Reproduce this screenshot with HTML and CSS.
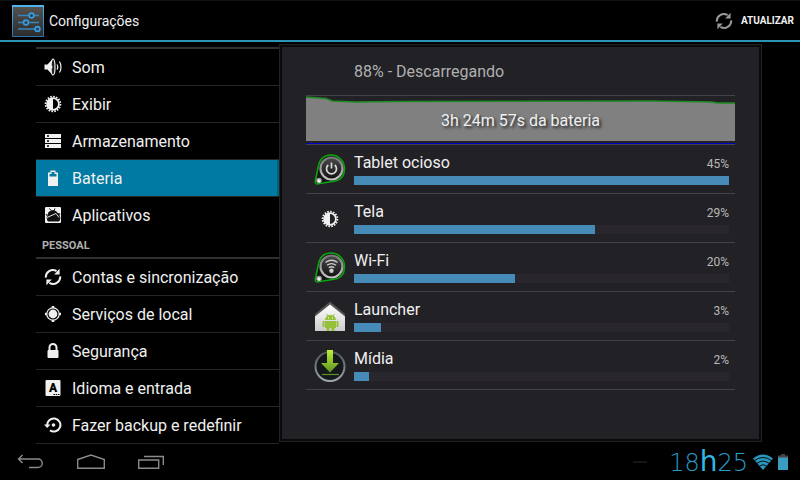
FILE: index.html
```html
<!DOCTYPE html>
<html lang="pt-BR">
<head>
    <meta charset="utf-8">
    <meta name="viewport" content="width=device-width, initial-scale=1">
    <title>Configurações</title>
    <link rel="stylesheet" href="styles.css">
</head>
<body>
    <!-- shared icons -->
    <svg class="defs" width="0" height="0" aria-hidden="true">
        <defs>
            <linearGradient id="tile" x1="0" y1="0" x2="0" y2="1">
                <stop offset="0" stop-color="#55534f"/>
                <stop offset="1" stop-color="#2c2c2c"/>
            </linearGradient>
            <linearGradient id="edge" x1="0" y1="0" x2="0" y2="1">
                <stop offset="0" stop-color="#4fb4ee"/>
                <stop offset="1" stop-color="#2a6fa8"/>
            </linearGradient>
            <linearGradient id="metal" x1="0" y1="0" x2="0" y2="1">
                <stop offset="0" stop-color="#777"/>
                <stop offset="1" stop-color="#c4c4c4"/>
            </linearGradient>
            <linearGradient id="dark" x1="0" y1="0" x2="0" y2="1">
                <stop offset="0" stop-color="#4a4a4a"/>
                <stop offset="1" stop-color="#111"/>
            </linearGradient>
            <linearGradient id="house" x1="0" y1="0" x2="0" y2="1">
                <stop offset="0" stop-color="#fff"/>
                <stop offset="1" stop-color="#ccc"/>
            </linearGradient>
            <linearGradient id="arrow" x1="0" y1="0" x2="0" y2="1">
                <stop offset="0" stop-color="#bdf03a"/>
                <stop offset="1" stop-color="#5c9420"/>
            </linearGradient>
            <linearGradient id="ring" x1="0" y1="0" x2="0" y2="1">
                <stop offset="0" stop-color="#4b535a"/>
                <stop offset="1" stop-color="#a0a8ac"/>
            </linearGradient>
        </defs>
        <symbol id="sync" viewBox="0 0 18 18">
            <path d="M1.8 9.6A7 7 0 0 1 12.6 3.2M16.2 8.4A7 7 0 0 1 5.4 14.8" fill="none" stroke="currentColor" stroke-width="2"/>
            <path d="M15.6 .8v5.6h-5.4zM2.4 17.2v-5.6h5.4z" fill="currentColor"/>
        </symbol>
        <symbol id="display" viewBox="0 0 18 18">
            <circle cx="9" cy="9" r="7.4" fill="none" stroke="currentColor" stroke-width="1.8" stroke-dasharray="1.6 1.3"/>
            <circle cx="9" cy="9" r="5.9" fill="none" stroke="currentColor" stroke-width="1.8"/>
            <path d="M9 3a6 6 0 0 0 0 12z" fill="currentColor"/>
        </symbol>
        <symbol id="badge" viewBox="0 0 32 32">
            <path d="M3 30C1.500 29.800 1 28.500 1.300 27L4.400 12C6 4.500 10.500 1 17 1a13.500 13.500 0 0 1 13.500 13.700c0 6.500-3.500 11-9 12.300z" fill="#151515" stroke="#08a80c" stroke-width="1.500"/>
            <circle cx="17.500" cy="14.500" r="11" fill="url(#dark)" stroke="url(#metal)" stroke-width="2.200"/>
            <circle cx="5" cy="26.500" r="2.800" fill="#999"/>
            <circle cx="5" cy="27" r="1.700" fill="#eee"/>
        </symbol>
    </svg>

    <header class="topbar">
        <svg class="app-icon" viewBox="0 0 32 32" aria-hidden="true">
            <rect x=".5" y=".5" width="31" height="31" fill="url(#tile)" stroke="url(#edge)"/>
            <path d="M1 1h30" stroke="#4fb4ee" stroke-width="2"/>
            <path d="M6 10.500h11M22 10.500h5M6 17.500h5M17 17.500h10M6 24h17" stroke="#3387c0" stroke-width="1.500"/>
            <g fill="#22465e" stroke="#3d9bdb" stroke-width="1.600">
                <circle cx="19.500" cy="10.500" r="2.400"/>
                <circle cx="14" cy="17.500" r="2.400"/>
                <circle cx="25.500" cy="24" r="2.400"/>
            </g>
        </svg>
        <h1 class="title">Configurações</h1>
        <button class="refresh" type="button">
            <svg class="icon" aria-hidden="true"><use href="#sync"/></svg>
            Atualizar
        </button>
    </header>

    <main class="content">
        <nav class="sidebar">
            <ul class="menu">
                <li><a class="item" href="#som">
                    <svg class="icon" viewBox="0 0 18 18" aria-hidden="true">
                        <path d="M.5 6.500h3L9 .5v17l-5.500-6h-3z" fill="currentColor"/>
                        <ellipse cx="9" cy="9" rx="2" ry="8" fill="#222" stroke="currentColor" stroke-width="1.200"/>
                        <path d="M7 6.500q3 2.500 0 5z" fill="currentColor"/>
                        <path d="M13 6.500q1.500 2.500 0 5M15.500 3.500q3 5.500 0 11" fill="none" stroke="currentColor" stroke-width="1.200"/>
                    </svg>Som</a></li>
                <li><a class="item" href="#exibir">
                    <svg class="icon" aria-hidden="true"><use href="#display"/></svg>Exibir</a></li>
                <li><a class="item" href="#armazenamento">
                    <svg class="icon" viewBox="0 0 18 18" aria-hidden="true">
                        <path d="M1 2h16v4H1zM1 7h16v4H1zM1 12h16v4H1z" fill="currentColor"/>
                        <path d="M3 4h2M3 9h2M3 14h2" stroke="#000" stroke-width="1.500"/>
                    </svg>Armazenamento</a></li>
                <li><a class="item active" href="#bateria" aria-current="page">
                    <svg class="icon" viewBox="0 0 18 18" aria-hidden="true">
                        <path d="M6.500 1.500h5v2H14V17H4V3.500h2.500z" fill="currentColor"/>
                        <path d="M5.500 5h2V3h3v2h2v2.500h-7z" fill="#0079a3"/>
                    </svg>Bateria</a></li>
                <li><a class="item" href="#aplicativos">
                    <svg class="icon" viewBox="0 0 18 18" aria-hidden="true">
                        <rect x="1" y="1" width="16" height="16" rx="1" fill="currentColor"/>
                        <path d="M4 8.500A5 4.500 0 0 1 13 6.500L4 10zM3 11l11-4 2 5-1 3H4zM5.500 2.500l1.500 2M11 2.500L10 4.500M2 8l2 3M15 7l1 2" fill="#111" stroke="#111"/>
                        <path d="M3 11.500l9-4 3 4" fill="none" stroke="#ddd" stroke-width="1"/>
                    </svg>Aplicativos</a></li>
            </ul>
            <h2 class="section">Pessoal</h2>
            <ul class="menu">
                <li><a class="item" href="#contas">
                    <svg class="icon" aria-hidden="true"><use href="#sync"/></svg>Contas e sincronização</a></li>
                <li><a class="item" href="#local">
                    <svg class="icon" viewBox="0 0 18 18" aria-hidden="true">
                        <circle cx="9" cy="9" r="4.400" fill="currentColor"/>
                        <circle cx="9" cy="9" r="6.200" fill="none" stroke="currentColor" stroke-width="1.200"/>
                        <path d="M9 1v2M9 15v2M1 9h2M15 9h2" stroke="currentColor" stroke-width="2.500"/>
                    </svg>Serviços de local</a></li>
                <li><a class="item" href="#seguranca">
                    <svg class="icon" viewBox="0 0 18 18" aria-hidden="true">
                        <path d="M5.500 9V5.500a3.500 3.500 0 0 1 7 0V9" fill="none" stroke="currentColor" stroke-width="2"/>
                        <rect x="3.500" y="8" width="11" height="8" rx="1" fill="currentColor"/>
                    </svg>Segurança</a></li>
                <li><a class="item" href="#idioma">
                    <svg class="icon" viewBox="0 0 18 18" aria-hidden="true">
                        <rect x="1.500" y="1" width="15" height="16" rx="1" fill="currentColor"/>
                        <text x="5" y="13" class="letter">A</text>
                        <path d="M9.500 15.500h6" stroke="#000" stroke-dasharray="1.500 .7"/>
                    </svg>Idioma e entrada</a></li>
                <li><a class="item" href="#backup">
                    <svg class="icon" viewBox="0 0 18 18" aria-hidden="true">
                        <path d="M3.200 9.500A6.600 6.600 0 1 1 6 14.400" fill="none" stroke="currentColor" stroke-width="2"/>
                        <path d="M0 8.500h6.500L3.200 12z" fill="currentColor"/>
                        <circle cx="9.500" cy="9" r="1.800" fill="currentColor"/>
                    </svg>Fazer backup e redefinir</a></li>
            </ul>
        </nav>

        <section class="panel">
            <p class="status">88% - Descarregando</p>
            <div class="history">
                <svg class="chart" viewBox="0 0 428 48" preserveAspectRatio="none" aria-hidden="true">
                    <path d="M0 1L20 2.500 26 5 50 6 90 5.500 345 5 405 6 410 7H428V45H0z" fill="#808080"/>
                    <path d="M0 1L20 2.500 26 5 50 6 90 5.500 345 5 405 6 410 7H428" fill="none" stroke="#1e8a22" stroke-width="1.500"/>
                    <path d="M0 47.500H428" stroke="#0000c8"/>
                </svg>
                <span class="duration">3h 24m 57s da bateria</span>
            </div>
            <ul class="usage">
                <li class="entry">
                    <svg class="usage-icon" viewBox="0 0 32 32" aria-hidden="true">
                        <use href="#badge"/>
                        <path d="M14.300 11a5 5 0 1 0 6.400 0M17.500 8.500v6" fill="none" stroke="#d8d8d8" stroke-width="1.700"/>
                    </svg>
                    <span class="name">Tablet ocioso</span><span class="percent">45%</span>
                    <div class="track"><div class="bar" style="width: 100%"></div></div>
                </li>
                <li class="entry">
                    <svg class="usage-icon small" aria-hidden="true"><use href="#display"/></svg>
                    <span class="name">Tela</span><span class="percent">29%</span>
                    <div class="track"><div class="bar" style="width: 64.2%"></div></div>
                </li>
                <li class="entry">
                    <svg class="usage-icon" viewBox="0 0 32 32" aria-hidden="true">
                        <use href="#badge"/>
                        <path d="M11.500 10.500q6-4.500 12 0M13 13.300q4.500-3.300 9 0M14.700 15.800q2.800-2 5.600 0" fill="none" stroke="#ccc" stroke-width="1.400"/>
                        <circle cx="17.500" cy="18.700" r="2.200" fill="#ccc"/>
                    </svg>
                    <span class="name">Wi-Fi</span><span class="percent">20%</span>
                    <div class="track"><div class="bar" style="width: 43%"></div></div>
                </li>
                <li class="entry">
                    <svg class="usage-icon" viewBox="0 0 32 32" aria-hidden="true">
                        <path d="M1 13L16 .5 31 13v4H1z" fill="#555"/>
                        <path d="M1 15.500L16 3.500l15 12V30H1z" fill="url(#house)"/>
                        <path d="M11 19a5.500 5 0 0 1 11 0zM11 20h11v7H11zM8.500 20h2v6h-2zM22.500 20h2v6h-2zM12.500 27h3v3h-3zM17.500 27h3v3h-3z" fill="#96c03a"/>
                        <path d="M12.500 13l1.500 2M20.500 13L19 15" stroke="#96c03a"/>
                        <path d="M14 17h1M18 17h1" stroke="#fff"/>
                    </svg>
                    <span class="name">Launcher</span><span class="percent">3%</span>
                    <div class="track"><div class="bar" style="width: 7.2%"></div></div>
                </li>
                <li class="entry">
                    <svg class="usage-icon" viewBox="0 0 32 32" aria-hidden="true">
                        <circle cx="16" cy="16.500" r="14.500" fill="#15191c" stroke="url(#ring)" stroke-width="2"/>
                        <path d="M13 0h6v13h6l-9 9.500L7 13h6z" fill="url(#arrow)"/>
                        <path d="M8 24.500h17" stroke="#5c9420" stroke-width="1.200"/>
                    </svg>
                    <span class="name">Mídia</span><span class="percent">2%</span>
                    <div class="track"><div class="bar" style="width: 4%"></div></div>
                </li>
            </ul>
        </section>
    </main>

    <footer class="sysbar">
        <button class="key" type="button" aria-label="Voltar">
            <svg viewBox="0 0 28 16"><path d="M5.500 1L1.500 5l4 4M1.500 5H21a4 4 0 0 1 0 8.500H12"/></svg>
        </button>
        <button class="key" type="button" aria-label="Início">
            <svg viewBox="0 0 28 16"><path d="M.7 5.500L14 1l13.300 4.500v8.800H.7z"/></svg>
        </button>
        <button class="key" type="button" aria-label="Recentes">
            <svg viewBox="0 0 28 16"><path d="M1.700 6h20v8.300h-20zM7 2.500h19.300V11"/></svg>
        </button>
        <span class="notice"></span>
        <time class="clock" datetime="18:25">18<b>h</b>25</time>
        <svg class="wifi" viewBox="0 0 20 16" aria-hidden="true">
            <path d="M0 4.500Q10-3.500 20 4.500L10 16z" fill="#2a95bd"/>
            <path d="M1.500 6.500q8.500-6 17 0M4 9.300q6-4.500 12 0M6.500 12q3.500-2.600 7 0" fill="none" stroke="#000" stroke-width=".9"/>
        </svg>
        <svg class="battery" viewBox="0 0 10 16" aria-hidden="true">
            <path d="M3 0h4v1.500h3V4H0V1.500h3z" fill="#444"/>
            <path d="M0 3.500h10V16H0z" fill="#3a9cc0"/>
        </svg>
    </footer>
</body>
</html>
```
FILE: styles.css
```css
* {
    box-sizing: border-box;
}
body {
    margin: 0;
    min-height: 100vh;
    display: flex;
    flex-direction: column;
    background: #000;
    color: #f0f0f0;
    font-family: Roboto, "Noto Sans", sans-serif;
    font-size: 16px;
}
h1, h2, p, ul {
    margin: 0;
    padding: 0;
}
ul {
    list-style: none;
}
button {
    border: 0;
    padding: 0;
    background: none;
    color: inherit;
    font-family: inherit;
    cursor: pointer;
}
svg {
    display: block;
    flex: none;
}
.defs {
    position: absolute;
}
.icon {
    width: 18px;
    height: 18px;
}

/* top bar */
.topbar {
    display: flex;
    align-items: center;
    height: 42px;
    padding: 0 6px 0 12px;
    border-top: 1px solid #111;
    border-bottom: 2px solid #2c94bb;
}
.app-icon {
    width: 32px;
    height: 32px;
}
.title {
    margin-left: 5px;
    font-size: 14px;
    font-weight: normal;
}
.refresh {
    display: flex;
    align-items: center;
    gap: 8px;
    margin-left: auto;
    font-size: 10px;
    font-weight: bold;
    text-transform: uppercase;
}
.refresh .icon {
    color: #999;
}

.content {
    flex: 1;
    display: flex;
    padding: 2px 38px 0 36px;
}

/* left menu */
.sidebar {
    width: 243px;
    padding-top: 3px;
}
.menu {
    border-top: 2px solid #303030;
}
.item {
    display: flex;
    align-items: center;
    gap: 10px;
    height: 37px;
    padding: 0 8px;
    border-bottom: 1px solid #262626;
    color: inherit;
    text-decoration: none;
}
.item.active {
    background: #0079a3;
    box-shadow: inset -2px 0 #006080;
}
.menu:first-child li:last-child .item {
    border-bottom-color: transparent;
}
.section {
    padding: 0 6px;
    color: #b0b0b0;
    font-size: 11px;
    line-height: 23px;
    text-transform: uppercase;
}
.letter {
    font-size: 12px;
    font-weight: 900;
}

/* battery details */
.panel {
    flex: 1;
    margin-bottom: 2px;
    padding: 3px 26px 0;
    border: 1px solid #222;
    background: #222126;
    box-shadow: inset 0 0 0 2px #0a0a0a;
}
.status {
    padding-left: 48px;
    border-bottom: 1px solid #434347;
    color: #b0b0b0;
    line-height: 47px;
}
.history {
    display: grid;
    place-items: center;
    border-bottom: 1px solid #434347;
}
.chart, .duration {
    grid-area: 1 / 1;
}
.chart {
    width: 100%;
    height: 48px;
}
.duration {
    text-shadow: 2px 2px 3px #222;
}
.entry {
    display: grid;
    grid-template-columns: 48px 1fr auto;
    grid-template-rows: 22px 9px;
    align-items: center;
    padding: 9px 6px 8px 0;
    border-bottom: 1px solid #434347;
}
.usage-icon {
    grid-row: 1 / 3;
    width: 32px;
    height: 32px;
    margin-left: 8px;
}
.usage-icon.small {
    width: 18px;
    height: 18px;
    margin-left: 15px;
}
.name {
    line-height: 18px;
    align-self: start;
}
.percent {
    color: #b8b8b8;
    font-size: 12px;
    line-height: 20px;
    align-self: start;
}
.track {
    grid-column: 2 / 4;
    height: 9px;
    background: #29272d;
}
.bar {
    height: 9px;
    background: #468ab8;
}

/* system bar */
.sysbar {
    display: flex;
    align-items: center;
    height: 36px;
    padding: 0 12px 0 17px;
}
.key {
    margin-right: 32px;
}
.key svg {
    width: 28px;
    height: 16px;
    fill: none;
    stroke: #8a8a8a;
    stroke-width: 1.4;
}
.notice {
    width: 14px;
    height: 2px;
    margin-left: auto;
    background: #151515;
}
.clock {
    margin: 0 5px 0 22px;
    color: #2a9cc8;
    font: 200 24px/32px "DejaVu Sans", sans-serif;
}
.clock b {
    color: #33b5e5;
    font: 400 28px/32px "DejaVu Sans", sans-serif;
}
.wifi {
    width: 20px;
    height: 16px;
    margin-right: 5px;
}
.battery {
    width: 10px;
    height: 16px;
}
```
